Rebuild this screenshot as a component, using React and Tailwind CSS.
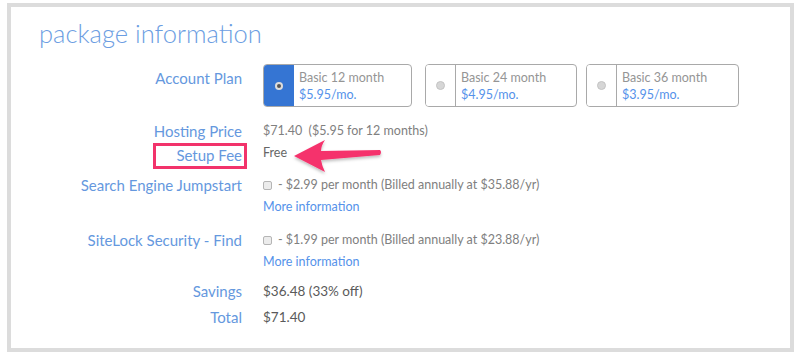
import React from "react";

const font = { fontFamily: "Lato, 'Open Sans', sans-serif" };

const plans = [
  { name: "Basic 12 month", price: "$5.95/mo.", selected: true, w: "w-[149px]", ml: "ml-0" },
  { name: "Basic 24 month", price: "$4.95/mo.", selected: false, w: "w-[152px]", ml: "ml-[13px]" },
  { name: "Basic 36 month", price: "$3.95/mo.", selected: false, w: "w-[153px]", ml: "ml-[9px]" },
];

const Label = ({ children, className = "" }) => (
  <div className={`w-[231px] shrink-0 text-right text-[15px] text-[#6598de] ${className}`}>
    {children}
  </div>
);

const Checkbox = () => (
  <span className="inline-block w-[9px] h-[9px] mr-[6px] rounded-[2px] border border-[#b5b5b5] bg-[#ececec] align-middle"></span>
);

const App = () => {
  return (
    <div className="w-[800px] h-[357px] bg-white overflow-hidden" style={font}>
      <div className="relative ml-[7px] mt-[3px] w-[787px] h-[349px] border-4 border-[#dcdcdc] bg-white">
        {/* Title */}
        <h1 className="pt-[10px] pl-[28px] text-[25.5px] leading-[32px] font-light text-[#6b9de2]">
          package information
        </h1>

        {/* Account plan */}
        <div className="flex mt-[15px] h-[43px]">
          <Label className="pt-[3px] leading-[22px]">Account Plan</Label>
          <div className="flex pl-[21px]">
            {plans.map((p) => (
              <div
                key={p.name}
                className={`flex ${p.w} ${p.ml} h-[43px] rounded-[4px] border border-[#a9a9a9] overflow-hidden`}
              >
                <div
                  className={`w-[30px] flex items-center justify-center border-r ${p.selected ? "bg-[#3575d3] border-[#3575d3]" : "bg-white border-[#a9a9a9]"}`}
                >
                  {p.selected ? (
                    <span className="w-[8px] h-[8px] rounded-full bg-[#dcdcdc] flex items-center justify-center">
                      <span className="w-[4px] h-[4px] rounded-full bg-[#555]"></span>
                    </span>
                  ) : (
                    <span className="w-[9px] h-[9px] rounded-full bg-[#d6d6d6] border border-[#c4c4c4]"></span>
                  )}
                </div>
                <div className="pl-[5px] pt-[4px] text-[12.5px] leading-[17px]">
                  <div className="text-[#959595]">{p.name}</div>
                  <div className="text-[#5592ea]">{p.price}</div>
                </div>
              </div>
            ))}
          </div>
        </div>

        {/* Hosting price */}
        <div className="flex mt-[12px] h-[24px] items-center">
          <Label>Hosting Price</Label>
          <div className="pl-[21px] text-[12.5px] text-[#808080]">
            $71.40&nbsp;&nbsp;($5.95 for 12 months)
          </div>
        </div>

        {/* Setup fee */}
        <div className="flex h-[24px] items-center">
          <Label className="relative">
            Setup Fee
            <span className="absolute left-[142px] top-[-1px] w-[94px] h-[26px] border-[3px] border-[#f2336b]"></span>
          </Label>
          <div className="pl-[21px] text-[12.5px] text-[#666] -mt-[4px]">Free</div>
        </div>

        {/* Search engine jumpstart */}
        <div className="flex mt-[6px]">
          <Label className="h-[24px] leading-[24px]">Search Engine Jumpstart</Label>
          <div className="pl-[21px] text-[12.5px]">
            <div className="h-[24px] leading-[24px] text-[#808080]">
              <Checkbox />- $2.99 per month (Billed annually at $35.88/yr)
            </div>
            <div className="h-[20px] leading-[20px] text-[#5592ea]">More information</div>
          </div>
        </div>

        {/* SiteLock */}
        <div className="flex mt-[11px]">
          <Label className="h-[24px] leading-[24px]">SiteLock Security - Find</Label>
          <div className="pl-[21px] text-[12.5px]">
            <div className="h-[24px] leading-[24px] text-[#808080]">
              <Checkbox />- $1.99 per month (Billed annually at $23.88/yr)
            </div>
            <div className="h-[20px] leading-[20px] text-[#5592ea]">More information</div>
          </div>
        </div>

        {/* Savings */}
        <div className="flex mt-[7px] h-[24px] items-center">
          <Label>Savings</Label>
          <div className="pl-[21px] text-[13.5px] text-[#5a5a5a]">$36.48 (33% off)</div>
        </div>

        {/* Total */}
        <div className="flex mt-[2px] h-[24px] items-center">
          <Label>Total</Label>
          <div className="pl-[21px] text-[13.5px] text-[#5a5a5a]">$71.40</div>
        </div>

        {/* Arrow annotation */}
        <svg
          className="absolute left-[-11px] top-[-7px]"
          width="800"
          height="357"
          viewBox="0 0 800 357"
        >
          <defs>
            <filter id="sh" x="-20%" y="-20%" width="140%" height="160%">
              <feDropShadow dx="0" dy="2" stdDeviation="1.5" floodColor="#000" floodOpacity="0.25" />
            </filter>
          </defs>
          <path
            d="M294,156 L325,140 Q321,146 321,151 L380,150 Q382,152 380,155 L321,160 Q322,166 325,172 Z"
            fill="#f5336c"
            filter="url(#sh)"
          />
        </svg>
      </div>
    </div>
  );
};

export default App;
